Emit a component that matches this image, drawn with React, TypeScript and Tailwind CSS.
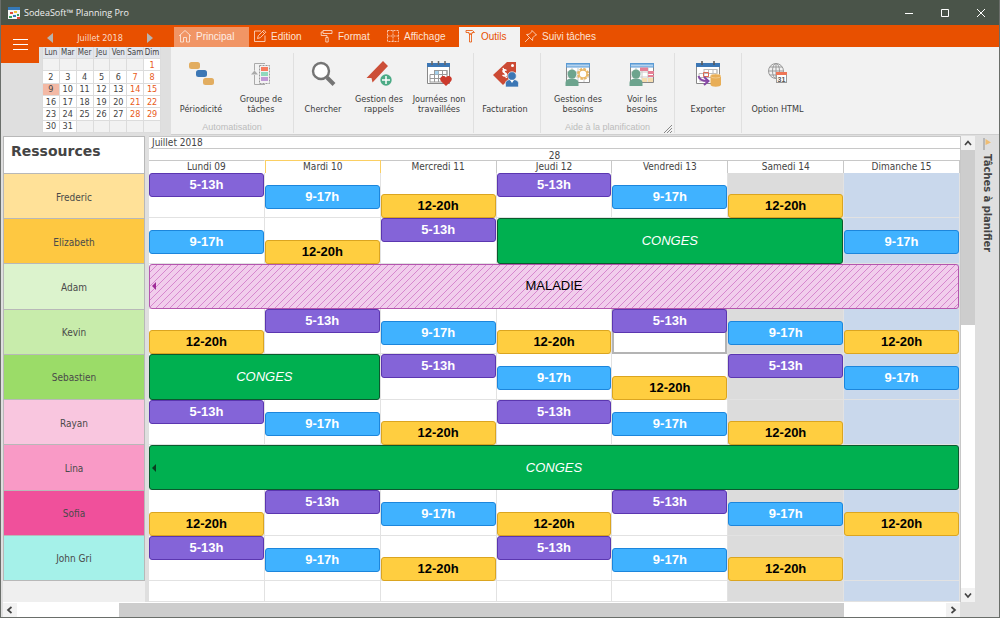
import type { ReactNode } from "react";
import clsx from "clsx";

type ShiftKind = "early" | "day" | "late";
type EntryKind = ShiftKind | "leave" | "sick";

interface Entry {
  kind: EntryKind;
  start: number;
  span: number;
  continued?: boolean;
}

interface Resource {
  name: string;
  color: string;
  entries: Entry[];
  selectedDay?: number;
}

const KINDS: Record<EntryKind, { label: string; className: string }> = {
  early: {
    label: "5-13h",
    className: "h-6 self-start border-[#5b36b0] bg-[#8464d8] font-bold text-white",
  },
  day: {
    label: "9-17h",
    className: "mt-3 h-6 self-start border-[#1c86dc] bg-[#40b2ff] font-bold text-white",
  },
  late: {
    label: "12-20h",
    className: "h-6 self-end border-[#dba520] bg-[#ffce40] font-bold text-black",
  },
  leave: {
    label: "CONGES",
    className: "h-full border-[#0b5a2e] bg-[#00b050] italic text-white",
  },
  sick: {
    label: "MALADIE",
    className: "h-full border-[#b456ae] bg-[#f1cdec] text-black",
  },
};

const shift = (kind: ShiftKind, start: number): Entry => ({ kind, start, span: 1 });

// Rotation on three consecutive shifts, beginning at the given column.
function rotation(order: ShiftKind[], start: number, count: number): Entry[] {
  return Array.from({ length: count }, (_, i) => shift(order[i % 3], start + i));
}

const EARLY_FIRST: ShiftKind[] = ["early", "day", "late"];
const LATE_FIRST: ShiftKind[] = ["late", "early", "day"];

const RESOURCES: Resource[] = [
  { name: "Frederic", color: "bg-[#ffe198]", entries: rotation(EARLY_FIRST, 1, 6) },
  {
    name: "Elizabeth",
    color: "bg-[#fec841]",
    entries: [
      shift("day", 1),
      shift("late", 2),
      shift("early", 3),
      { kind: "leave", start: 4, span: 3 },
      shift("day", 7),
    ],
  },
  {
    name: "Adam",
    color: "bg-[#dcf3cd]",
    entries: [{ kind: "sick", start: 1, span: 7, continued: true }],
  },
  {
    name: "Kevin",
    color: "bg-[#c8ecab]",
    entries: rotation(LATE_FIRST, 1, 7),
    selectedDay: 5,
  },
  {
    name: "Sebastien",
    color: "bg-[#9bdc68]",
    entries: [{ kind: "leave", start: 1, span: 2 }, ...rotation(EARLY_FIRST, 3, 5)],
  },
  { name: "Rayan", color: "bg-[#f9c6df]", entries: rotation(EARLY_FIRST, 1, 6) },
  {
    name: "Lina",
    color: "bg-[#f99ac6]",
    entries: [{ kind: "leave", start: 1, span: 7, continued: true }],
  },
  { name: "Sofia", color: "bg-[#f0509b]", entries: rotation(LATE_FIRST, 1, 7) },
  { name: "John Gri", color: "bg-[#a5f1e9]", entries: rotation(EARLY_FIRST, 1, 6) },
];

const DAYS = [
  "Lundi 09",
  "Mardi 10",
  "Mercredi 11",
  "Jeudi 12",
  "Vendredi 13",
  "Samedi 14",
  "Dimanche 15",
];

const WEEKDAYS = ["Lun", "Mar", "Mer", "Jeu", "Ven", "Sam", "Dim"];

const TAHOMA = "font-['DejaVu_Sans_Condensed','DejaVu_Sans',sans-serif]";
const ARIAL = "font-['Liberation_Sans',Arial,sans-serif]";

/* ---------- icons ---------- */

function Icon({ children }: { children: ReactNode }) {
  return (
    <svg viewBox="0 0 28 28" className="size-7 shrink-0" fill="none" aria-hidden="true">
      {children}
    </svg>
  );
}

function TabIcon({ children }: { children: ReactNode }) {
  return (
    <svg
      viewBox="0 0 14 14"
      className="size-3.5 shrink-0"
      fill="none"
      stroke="currentColor"
      strokeWidth=".8"
      aria-hidden="true"
    >
      {children}
    </svg>
  );
}

const homeIcon = (
  <TabIcon>
    <path d="M1 7 7 1.500 13 7M2.500 6v7h3V8.500h3V13h3V6" />
  </TabIcon>
);

const editIcon = (
  <TabIcon>
    <path d="M8 2H1.500v10.500H12V6.500M4.500 9.500l.8-2.800L10.800 1.200l2 2L7.300 8.700zM9.500 2.500l2 2" />
  </TabIcon>
);

const formatIcon = (
  <TabIcon>
    <path d="M3 1.500h9v3H3zM3 3H1.200v3.500H7v2M5.800 8.500h2.400V13H5.800z" />
  </TabIcon>
);

const displayIcon = (
  <TabIcon>
    <path strokeDasharray="2 1" d="M1.500 1.500h11v11h-11zM7 1.500v11M1.500 7h11" />
  </TabIcon>
);

const toolsIcon = (
  <TabIcon>
    <path d="M3 1.500h6.500l2 2H9V5H6V3.500H3zM6.500 5h2v8h-2z" />
  </TabIcon>
);

const pinIcon = (
  <TabIcon>
    <path d="M8 1.500 12.500 6l-1.300.3-2.400 2.400-.3 2.800-6-6 2.800-.3L7.700 2.800zM5.500 8.500 1 13" />
  </TabIcon>
);

const recurrenceIcon = (
  <Icon>
    <rect x="2" y="1" width="11" height="7" rx="2.500" fill="#e2ad60" />
    <rect x="9" y="9" width="11" height="7" rx="2.500" fill="#3c77b5" />
    <rect x="16" y="17" width="11" height="7" rx="2.500" fill="#e2ad60" />
  </Icon>
);

const groupIcon = (
  <Icon>
    <path d="M18 2.500H7.500v7M7.500 14v9.500H18" stroke="#aaa" />
    <path d="m4 13.500 3.500-4 3.500 4z" fill="#aaa" />
    <rect x="12.500" y="4.500" width="10" height="18" stroke="#999" strokeDasharray="2 1" />
    <path d="M14 6h7v4h-7z" fill="#f77b5e" />
    <path d="M14 11h7v4h-7z" fill="#8fd9be" />
    <path d="M14 16h7v4h-7z" fill="#bf9ad6" />
  </Icon>
);

const searchIcon = (
  <Icon>
    <circle cx="12" cy="10" r="8" fill="#fff" stroke="#757575" strokeWidth="2.400" />
    <path d="m18 16.500 7 7" stroke="#757575" strokeWidth="4" />
  </Icon>
);

const reminderIcon = (
  <Icon>
    <path d="M18 0 23 5 7.500 21.500 6.500 17 1.500 17z" fill="#cc4f38" />
    <circle cx="21" cy="19" r="5.700" fill="#4cab86" />
    <path d="M21 15v8M17 19h8" stroke="#fff" strokeWidth="1.500" />
  </Icon>
);

const holidayIcon = (
  <Icon>
    <path d="M2.500 2.500h22v20h-22z" fill="#fff" stroke="#888" />
    <path d="M2 2h23v4H2z" fill="#3c77b5" />
    <path d="M7 0v4M13.500 0v4M20 0v4" stroke="#666" strokeWidth="1.500" />
    <path d="M9 9.500h13v4H5v8M5 17.500h17M5 21h14M9.500 9v12M13.500 9v12M17.500 9v12M22 9v9" stroke="#999" />
    <path d="M10 10h3.500v3.500H10z" fill="#a4d2ee" />
    <path d="m21 25-5-4.800c-2-2.500 0-5.200 2.500-5.200 1.200 0 2 .6 2.500 1.500.5-.9 1.300-1.500 2.500-1.500 2.500 0 4.500 2.700 2.500 5.200z" fill="#cc3a2c" />
  </Icon>
);

const billingIcon = (
  <Icon>
    <path d="M16 1h9v10L12 24 2 14z" fill="#cc4a34" />
    <circle cx="21.500" cy="4.500" r="1.500" fill="#fff" />
    <path d="M15.500 9.500c-2-1.500-4-.5-3.500 1 .4 1.500 3.500 1 3.600 3 0 1.800-2.500 2-4.100.5M12 7l3.500 10" stroke="#fff" strokeWidth="1.400" />
    <path d="M14.500 26v-3.500c0-3 2.500-4 6.500-4s6.500 1 6.500 4V26z" fill="#3c77b5" stroke="#f2f2f2" strokeWidth=".7" />
    <circle cx="21" cy="15" r="4.300" fill="#3c77b5" stroke="#f2f2f2" strokeWidth=".7" />
    <path d="m19 19 2 3 2-3z" fill="#fff" />
  </Icon>
);

const staffGrid = (
  <>
    <path d="M2.500 2.500h23v19h-23z" fill="#fff" stroke="#888" />
    <path d="M2 2h24v4.500H2z" fill="#5b9bd5" />
    <path d="M3 3.500h22v2H3z" fill="#b5d3ee" />
    <path d="M3 11h22M3 16h22M8 7v14M14 7v14M20 7v14" stroke="#c9c9c9" />
  </>
);

const staffPerson = (
  <>
    <path d="M1.500 25v-3c0-3 2.500-4.500 6.500-4.500s6.500 1.500 6.500 4.500v3z" fill="#6da48e" />
    <circle cx="8" cy="13" r="4.500" fill="#6da48e" />
  </>
);

const manageNeedsIcon = (
  <Icon>
    {staffGrid}
    <circle cx="19" cy="13" r="5" fill="#fff" stroke="#e9b765" strokeWidth="2" strokeDasharray="2.500 1.400" />
    <circle cx="19" cy="13" r="4" fill="#fff" stroke="#e9b765" strokeWidth="1.500" />
    {staffPerson}
  </Icon>
);

const viewNeedsIcon = (
  <Icon>
    {staffGrid}
    <path d="M12 6.500h8V10h6v3h-6v-3h-8zM20 14h6v2h-6z" fill="#e58095" />
    <path d="M14 17h5v4h-5zM20 17h5v4h-5z" fill="#f5dcae" />
    {staffPerson}
  </Icon>
);

const exportIcon = (
  <Icon>
    <path d="M2.500 2.500h23v20h-23z" fill="#fff" stroke="#888" />
    <path d="M2 2h24v4H2z" fill="#3c77b5" />
    <path d="M8 0v4M20 0v4" stroke="#555" strokeWidth="1.500" />
    <path d="M10 8.500h13v4H5v4h12M10 8v9M14.500 8v9M19 8v9M23 8v5M5 20h10" stroke="#bbb" />
    <path d="M9.500 11.500h5v4h-5z" stroke="#df6a50" />
    <path d="M4.500 15c1 4.500 5 5 9 5M10 16l4.500 4-4.500 4" stroke="#8648a5" strokeWidth="2" />
    <path d="M16.500 15v8.500c0 3 10.500 3 10.500 0V15z" fill="#e8ae57" />
    <ellipse cx="21.700" cy="15" rx="5.200" ry="2" fill="#e8ae57" stroke="#f7dcae" strokeWidth=".6" />
  </Icon>
);

const htmlIcon = (
  <Icon>
    <circle cx="12" cy="10" r="7.500" stroke="#999" />
    <ellipse cx="12" cy="10" rx="3.500" ry="7.500" stroke="#999" />
    <path d="M4.500 10h15M6 6h12M6 14h12M12 2.500v15" stroke="#999" />
    <rect x="12.500" y="11.500" width="10" height="10" fill="#fff" stroke="#999" />
    <path d="M12 11h11v3H12z" fill="#ee7657" />
    <text x="17.500" y="20.500" textAnchor="middle" fontSize="7" fontWeight="bold" fontFamily="Liberation Sans, sans-serif" fill="#555">
      31
    </text>
  </Icon>
);

function AppLogo() {
  return (
    <svg viewBox="0 0 12 12" className="size-3" aria-hidden="true">
      <path d="M0 0h12v12H0z" fill="#f5f5f5" />
      <path d="M0 0h12v3H0z" fill="#3478b8" />
      <path d="M2 5h3v2H2z" fill="#e0483a" />
      <path d="M6 4h3v2H6z" fill="#f1bd37" />
      <path d="M9 7h2v2H9zM1 9h3v2H1z" fill="#39a35b" />
      <path d="M5 8h3v2H5z" fill="#3478b8" />
      <path d="M9 10h3v2H9z" fill="#e0483a" />
    </svg>
  );
}

function Chevron({ d }: { d: string }) {
  return (
    <svg viewBox="0 0 8 8" className="size-2" fill="none" stroke="#444" strokeWidth="1.700" aria-hidden="true">
      <path d={d} />
    </svg>
  );
}

/* ---------- window chrome ---------- */

function TitleBar() {
  return (
    <header className="flex h-[25px] shrink-0 items-center bg-[#4a5449] pl-[7px]">
      <AppLogo />
      <h1 className="pl-1 font-['Open_Sans','Noto_Sans',sans-serif] text-[9px] text-[#f0f0f0]">
        SodeaSoft™ Planning Pro
      </h1>
      <div className="ml-auto flex h-full">
        <button type="button" aria-label="Réduire" className="grid w-9 place-items-center">
          <svg viewBox="0 0 8 8" className="size-2" stroke="#fff" fill="none">
            <path d="M0 4.500h8" />
          </svg>
        </button>
        <button type="button" aria-label="Agrandir" className="grid w-9 place-items-center">
          <svg viewBox="0 0 8 8" className="size-2" stroke="#fff" fill="none">
            <path d="M.5.500h7v7h-7z" />
          </svg>
        </button>
        <button type="button" aria-label="Fermer" className="grid w-9 place-items-center">
          <svg viewBox="0 0 8 8" className="size-2" stroke="#fff" fill="none">
            <path d="m0 0 8 8M8 0 0 8" />
          </svg>
        </button>
      </div>
    </header>
  );
}

function MiniCalendar() {
  // July 2018 begins on a Sunday, so six cells come before the 1st.
  const weeks = Array.from({ length: 6 }, (_, w) =>
    Array.from({ length: 7 }, (_, d) => {
      const day = w * 7 + d - 5;
      return day >= 1 && day <= 31 ? day : null;
    })
  );

  return (
    <div className={clsx("w-[122px] shrink-0 text-[9px] leading-[10px]", TAHOMA)}>
      <div className="flex h-[22px] items-center justify-between px-2 pt-1 text-[#fbd9c6]">
        <button type="button" aria-label="Mois précédent">
          <svg viewBox="0 0 6 10" className="h-2.5 w-1.5" fill="#b9b4b0">
            <path d="M6 0v10L0 5z" />
          </svg>
        </button>
        <span>Juillet 2018</span>
        <button type="button" aria-label="Mois suivant">
          <svg viewBox="0 0 6 10" className="h-2.5 w-1.5" fill="#b9b4b0">
            <path d="M0 0v10l6-5z" />
          </svg>
        </button>
      </div>
      <table className="ml-[3px] h-[86px] w-[119px] table-fixed border-collapse text-center text-[#444]">
        <thead>
          <tr className="bg-[#e3e6ec]">
            {WEEKDAYS.map((d) => (
              <th key={d} scope="col" className="border-x border-[#dcdcdc] p-0 pt-px text-[8px] font-normal">
                {d}
              </th>
            ))}
          </tr>
        </thead>
        <tbody>
          {weeks.map((week, w) => (
            <tr key={w}>
              {week.map((day, d) => (
                <td
                  key={d}
                  className={clsx(
                    "border border-[#dcdcdc] p-0",
                    day === null ? "bg-[#f2f2f2]" : day === 9 ? "bg-[#f3b9a5]" : "bg-white",
                    d > 4 && "text-[#e85a20]"
                  )}
                >
                  {day}
                </td>
              ))}
            </tr>
          ))}
        </tbody>
      </table>
    </div>
  );
}

/* ---------- ribbon ---------- */

const TABS = [
  { label: "Principal", icon: homeIcon, className: "w-[75px] bg-[#f19565] text-[#fdeee5]" },
  { label: "Edition", icon: editIcon, className: "w-[67px] text-[#fde3d5]" },
  { label: "Format", icon: formatIcon, className: "w-[66px] text-[#fde3d5]" },
  { label: "Affichage", icon: displayIcon, className: "w-[77px] text-[#fde3d5]" },
  { label: "Outils", icon: toolsIcon, className: "w-[61px] bg-[#f2f2f2] text-[#e85000]" },
  { label: "Suivi tâches", icon: pinIcon, className: "text-[#fde3d5]" },
];

function RibbonButton({ icon, label, width }: { icon: ReactNode; label: string; width: string }) {
  return (
    <button type="button" className={clsx("flex h-[53px] flex-col items-center", width)}>
      {icon}
      <span className="mt-auto text-[9px] leading-[10px] text-[#3c3c3c]">{label}</span>
    </button>
  );
}

function RibbonGroup({
  caption,
  className,
  launcher,
  children,
}: {
  caption?: string;
  className: string;
  launcher?: boolean;
  children: ReactNode;
}) {
  return (
    <section className="mt-1.5 flex h-20 shrink-0 flex-col border-r border-[#e0e0e0] pt-2 last:border-transparent">
      <div className={clsx("flex justify-end", className)}>{children}</div>
      {caption && (
        <div className="relative mt-auto text-center text-[9px] leading-3 text-[#bcbcbc]">
          <span className={ARIAL}>{caption}</span>
          {launcher && (
            <svg viewBox="0 0 8 8" className="absolute right-0.5 bottom-0 size-2" stroke="#888" fill="none">
              <path d="m0 8 8-8M3 8l5-5M6 8l2-2" />
            </svg>
          )}
        </div>
      )}
    </section>
  );
}

function Ribbon() {
  return (
    <div className="flex h-[110px] shrink-0 bg-[linear-gradient(#e85000_22px,#dfdfdf_22px)]">
      <button
        type="button"
        aria-label="Menu"
        className="flex h-[38px] w-[38px] shrink-0 flex-col items-center justify-center gap-1 bg-[#e85000]"
      >
        <span className="h-px w-[15px] bg-white" />
        <span className="h-px w-[15px] bg-white" />
        <span className="h-px w-[15px] bg-white" />
      </button>
      <MiniCalendar />
      <div className="ml-2.5 flex min-w-0 grow flex-col">
        <nav className={clsx("flex h-[22px] items-end pl-[3px] text-[10px]", ARIAL)}>
          {TABS.map((tab) => (
            <button
              key={tab.label}
              type="button"
              className={clsx("flex h-5 items-center gap-1 pb-0.5 pl-1", tab.className)}
            >
              {tab.icon}
              {tab.label}
            </button>
          ))}
        </nav>
        <div className="flex grow border-b border-[#cfcfcf] bg-[#f2f2f2]">
          <RibbonGroup caption="Automatisation" className="w-[122px] pr-0.5">
            <RibbonButton icon={recurrenceIcon} label="Périodicité" width="w-[60px]" />
            <RibbonButton icon={groupIcon} label="Groupe de tâches" width="w-[60px]" />
          </RibbonGroup>
          <RibbonGroup className="w-[179px] pr-0.5">
            <RibbonButton icon={searchIcon} label="Chercher" width="w-14" />
            <RibbonButton icon={reminderIcon} label="Gestion des rappels" width="w-14" />
            <RibbonButton icon={holidayIcon} label="Journées non travaillées" width="w-16" />
          </RibbonGroup>
          <RibbonGroup className="w-[66px] pr-1">
            <RibbonButton icon={billingIcon} label="Facturation" width="w-full" />
          </RibbonGroup>
          <RibbonGroup caption="Aide à la planification" className="w-[133px]" launcher>
            <RibbonButton icon={manageNeedsIcon} label="Gestion des besoins" width="w-16" />
            <RibbonButton icon={viewNeedsIcon} label="Voir les besoins" width="w-16 px-2" />
          </RibbonGroup>
          <RibbonGroup className="w-[66px]">
            <RibbonButton icon={exportIcon} label="Exporter" width="w-full" />
          </RibbonGroup>
          <RibbonGroup className="w-[71px]">
            <RibbonButton icon={htmlIcon} label="Option HTML" width="w-full" />
          </RibbonGroup>
        </div>
      </div>
    </div>
  );
}

/* ---------- planning ---------- */

function ResourceList() {
  return (
    <aside className="grid w-[142px] shrink-0 grid-rows-[38px_repeat(9,minmax(0,1fr))_21px] bg-[#efefef]">
      <h2 className="border border-[#b8b8b8] bg-white pt-1 pl-[7px] font-['DejaVu_Sans',sans-serif] text-sm font-bold text-[#444]">
        Ressources
      </h2>
      {RESOURCES.map((r) => (
        <div
          key={r.name}
          className={clsx(
            "flex items-center justify-center border-x border-b border-[#b8b8b8] pt-0.5 text-[10px] text-[#4a4a4a]",
            r.color
          )}
        >
          {r.name}
        </div>
      ))}
    </aside>
  );
}

function Hatching() {
  return (
    <svg className="absolute inset-0 size-full" aria-hidden="true">
      <defs>
        <pattern id="hatch" width="7" height="7" patternUnits="userSpaceOnUse">
          <path d="M-1 1 1-1M0 7 7 0M6 8 8 6" stroke="#d37fcb" strokeWidth=".9" />
        </pattern>
      </defs>
      <rect width="100%" height="100%" fill="url(#hatch)" />
    </svg>
  );
}

function EntryBar({ entry }: { entry: Entry }) {
  const kind = KINDS[entry.kind];
  return (
    <button
      type="button"
      style={{ gridColumn: `${entry.start} / span ${entry.span}` }}
      className={clsx(
        "row-start-1 mr-px flex items-center justify-center rounded-[3px] border text-[13px] leading-4",
        entry.continued && "relative",
        kind.className
      )}
    >
      {entry.kind === "sick" && <Hatching />}
      {entry.continued && (
        <svg
          viewBox="0 0 4 8"
          className={clsx(
            "absolute top-1/2 left-0.5 h-2 w-1 -translate-y-1/2",
            entry.kind === "sick" ? "fill-[#a02a98]" : "fill-[#0a3d20]"
          )}
        >
          <path d="M4 0v8L0 4z" />
        </svg>
      )}
      <span className="z-10">{kind.label}</span>
    </button>
  );
}

function DayCells({ selectedDay }: { selectedDay?: number }) {
  return (
    <>
      {DAYS.map((day, i) => (
        <div
          key={day}
          style={{ gridColumn: i + 1 }}
          className={clsx(
            "row-start-1",
            selectedDay === i + 1
              ? "mr-px border-2 border-[#b4b4b4]"
              : "border-r border-b border-[#e2e2e2]",
            i === 5 ? "bg-[#dcdcdc]" : i === 6 ? "bg-[#c9d8ec]" : "bg-white"
          )}
        />
      ))}
    </>
  );
}

function Schedule() {
  return (
    <main className="grid min-w-0 grow grid-rows-[13px_11px_13px_repeat(9,minmax(0,1fr))_21px]">
      <div className="border-t border-b border-[#c8c8c8] bg-white pl-[3px] text-[10px] leading-[12px] text-[#444]">
        Juillet 2018
      </div>
      <div className="bg-white text-center text-[10px] leading-[13px] text-[#444]">28</div>
      <div className="grid grid-cols-7 bg-white text-center text-[10px] leading-[12px] text-[#444]">
        {DAYS.map((day, i) => (
          <div
            key={day}
            className={clsx(
              "border-t border-r border-b",
              i === 1 ? "border-l border-[#fbcf62]" : "border-[#c8c8c8]",
              i === 0 && "border-r-transparent"
            )}
          >
            {day}
          </div>
        ))}
      </div>
      {RESOURCES.map((r) => (
        <div
          key={r.name}
          className={clsx("grid grid-cols-7 grid-rows-[minmax(0,1fr)]", ARIAL)}
        >
          <DayCells selectedDay={r.selectedDay} />
          {r.entries.map((entry) => (
            <EntryBar key={entry.start} entry={entry} />
          ))}
        </div>
      ))}
      <div className="grid grid-cols-7 grid-rows-1">
        <DayCells />
      </div>
    </main>
  );
}

function VerticalScrollbar() {
  return (
    <div className="flex w-[15px] shrink-0 flex-col border-l border-[#c8c8c8] bg-white">
      <button type="button" aria-label="Monter" className="grid h-[14px] place-items-center bg-[#f2f2f2]">
        <Chevron d="M1 6 4 2.500 7 6" />
      </button>
      <div className="grow">
        <div className="h-[40%] bg-[#cdcdcd]" />
      </div>
      <button type="button" aria-label="Descendre" className="grid h-[14px] place-items-center bg-[#f2f2f2]">
        <Chevron d="M1 2.500 4 6 7 2.500" />
      </button>
    </div>
  );
}

function HorizontalScrollbar() {
  return (
    <div className="flex h-[15px] shrink-0 pr-[39px] pl-0.5">
      <div className="flex grow bg-white pt-px">
        <button type="button" aria-label="Gauche" className="grid w-[14px] place-items-center bg-[#f2f2f2]">
          <Chevron d="M5.500 1 2 4l3.500 3" />
        </button>
        <div className="flex grow">
          <div className="ml-[11%] w-[78%] bg-[#cdcdcd]" />
        </div>
        <button type="button" aria-label="Droite" className="grid w-[14px] place-items-center bg-[#f2f2f2]">
          <Chevron d="M2.500 1 6 4 2.500 7" />
        </button>
      </div>
    </div>
  );
}

export default function App() {
  return (
    <div
      className={clsx(
        "flex h-screen flex-col overflow-hidden border-x border-b border-[#6a6e6a] bg-[#dfdfdf]",
        TAHOMA
      )}
    >
      <TitleBar />
      <Ribbon />
      <div className="flex min-h-0 grow pt-px pl-0.5">
        <ResourceList />
        <div className="w-1 shrink-0" />
        <Schedule />
        <VerticalScrollbar />
        <button
          type="button"
          className="flex w-[24px] shrink-0 flex-col items-center gap-1 pt-0.5 text-[11px] leading-4 font-bold text-[#444]"
        >
          <svg viewBox="0 0 10 12" className="h-3 w-2.5" aria-hidden="true">
            <path d="M2 0v12" stroke="#aaa" strokeWidth="1.500" />
            <path d="M3.500 1 9 4.500 3.500 7z" fill="#efbd73" />
          </svg>
          <span className="[writing-mode:vertical-rl]">Tâches à planifier</span>
        </button>
      </div>
      <HorizontalScrollbar />
    </div>
  );
}
